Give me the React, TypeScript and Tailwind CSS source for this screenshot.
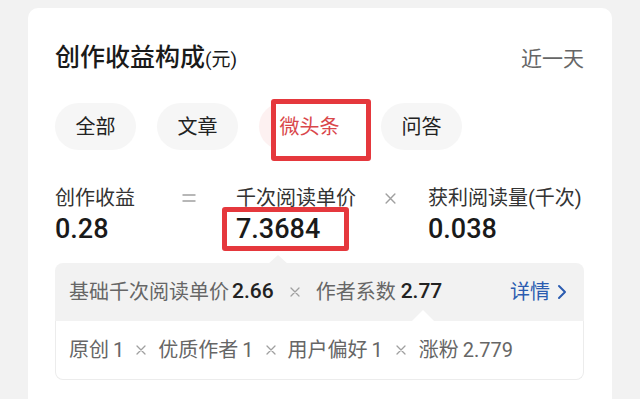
import React from "react";

const FONT = { fontFamily: '"Roboto", "Noto Sans CJK SC", sans-serif' };

function Chevron() {
  return (
    <svg width="10" height="16" viewBox="0 0 10 16" className="ml-[7px]">
      <path d="M2 2 L8 8 L2 14" fill="none" stroke="#2b5cb0" strokeWidth="2" strokeLinecap="round" strokeLinejoin="round" />
    </svg>
  );
}

function Times({ cls = "", size = 10 }: { cls?: string; size?: number }) {
  return (
    <svg width={size} height={size} viewBox="0 0 10 10" className={`shrink-0 ${cls}`}>
      <path d="M1 1 L9 9 M9 1 L1 9" stroke="#a0a0a0" strokeWidth="1.3" strokeLinecap="round" />
    </svg>
  );
}

function Equals() {
  return (
    <svg width="14" height="8" viewBox="0 0 14 8">
      <path d="M0.5 1 H13.5 M0.5 7 H13.5" stroke="#a0a0a0" strokeWidth="1.3" />
    </svg>
  );
}

export default function App() {
  return (
    <div className="w-[640px] h-[399px] bg-[#f2f2f2] overflow-hidden pt-[8px] px-[28px]" style={FONT}>
      <div className="bg-white rounded-[10px] h-[420px] pl-[27px] pr-[28px]">
        {/* title */}
        <div className="flex justify-between items-center h-[32px] pt-[35px] box-content">
          <div className="flex items-baseline text-[#1a1a1a]">
            <span className="text-[25px] font-medium leading-[32px]">创作收益构成</span>
            <span className="text-[19px] leading-[32px]">(元)</span>
          </div>
          <span className="text-[21px] text-[#666] leading-[32px]">近一天</span>
        </div>

        {/* tabs */}
        <div className="flex gap-[21px] mt-[28px]">
          <div className="h-[47px] w-[81px] rounded-full bg-[#f6f6f6] flex items-center justify-center text-[20px] text-[#222]">全部</div>
          <div className="h-[47px] w-[81px] rounded-full bg-[#f6f6f6] flex items-center justify-center text-[20px] text-[#222]">文章</div>
          <div className="relative h-[47px] w-[101px] rounded-full bg-[#fdf1f1] flex items-center justify-center text-[20px] text-[#d9474b]">
            <div className="absolute left-[12px] top-[-4px] w-[100px] h-[62px] bg-white border-[5px] border-[#e5383d] rounded-[3px]" />
            <span className="relative">微头条</span>
          </div>
          <div className="h-[47px] w-[81px] rounded-full bg-[#f6f6f6] flex items-center justify-center text-[20px] text-[#222]">问答</div>
        </div>

        {/* metrics */}
        <div className="flex mt-[36px] text-[#333]">
          <div className="w-[120px]">
            <div className="text-[20px] leading-[24px]">创作收益</div>
            <div className="text-[27px] font-medium leading-[30px] mt-[4px] text-[#1a1a1a]">0.28</div>
          </div>
          <div className="w-[28px] h-[24px] flex items-center justify-center"><Equals /></div>
          <div className="relative w-[140px] ml-[33px]">
            <div className="text-[20px] leading-[24px]">千次阅读单价</div>
            <div className="absolute left-[-14px] top-[21px] w-[127px] h-[44px] bg-white border-[5px] border-[#e5383d] rounded-[3px]" />
            <div className="relative text-[27px] font-medium leading-[30px] mt-[4px] text-[#1a1a1a]">7.3684</div>
          </div>
          <div className="w-[28px] h-[24px] flex items-center justify-center"><Times size={11} /></div>
          <div className="ml-[24px]">
            <div className="text-[20px] leading-[24px]">获利阅读量(千次)</div>
            <div className="text-[27px] font-medium leading-[30px] mt-[4px] text-[#1a1a1a]">0.038</div>
          </div>
        </div>

        {/* panel */}
        <div className="relative mt-[19px] w-[529px] rounded-[8px]">
          <svg className="absolute left-[213px] top-[-8px]" width="20" height="9" viewBox="0 0 20 9">
            <path d="M0 9 L10 0 L20 9 Z" fill="#f2f2f2" />
          </svg>
          <div className="h-[58px] bg-[#f2f2f2] rounded-t-[8px] flex items-center pl-[14px] pr-[17px] text-[20px] text-[#666]">
            <span>基础千次阅读单价</span>
            <span className="ml-[3px] text-[21px] font-medium text-[#222]">2.66</span>
            <Times cls="mx-[16px]" />
            <span>作者系数</span>
            <span className="ml-[5px] text-[21px] font-medium text-[#222]">2.77</span>
            <span className="ml-auto flex items-center text-[#2b5cb0]">
              详情
              <Chevron />
            </span>
          </div>
          <div className="relative h-[59px] bg-white border border-t-0 border-[#ececec] rounded-b-[8px] flex items-center pl-[13px] text-[20px] text-[#666]">
            <svg className="absolute left-[356px] top-[-11px]" width="22" height="11" viewBox="0 0 22 11">
              <path d="M0 11 L11 0 L22 11 Z" fill="#ffffff" />
            </svg>
            <span>原创</span>
            <span className="ml-[4px]">1</span>
            <Times cls="mx-[12px]" />
            <span>优质作者</span>
            <span className="ml-[4px]">1</span>
            <Times cls="mx-[12px]" />
            <span>用户偏好</span>
            <span className="ml-[4px]">1</span>
            <Times cls="mx-[13px]" />
            <span>涨粉</span>
            <span className="ml-[4px]">2.779</span>
          </div>
        </div>
      </div>
    </div>
  );
}
